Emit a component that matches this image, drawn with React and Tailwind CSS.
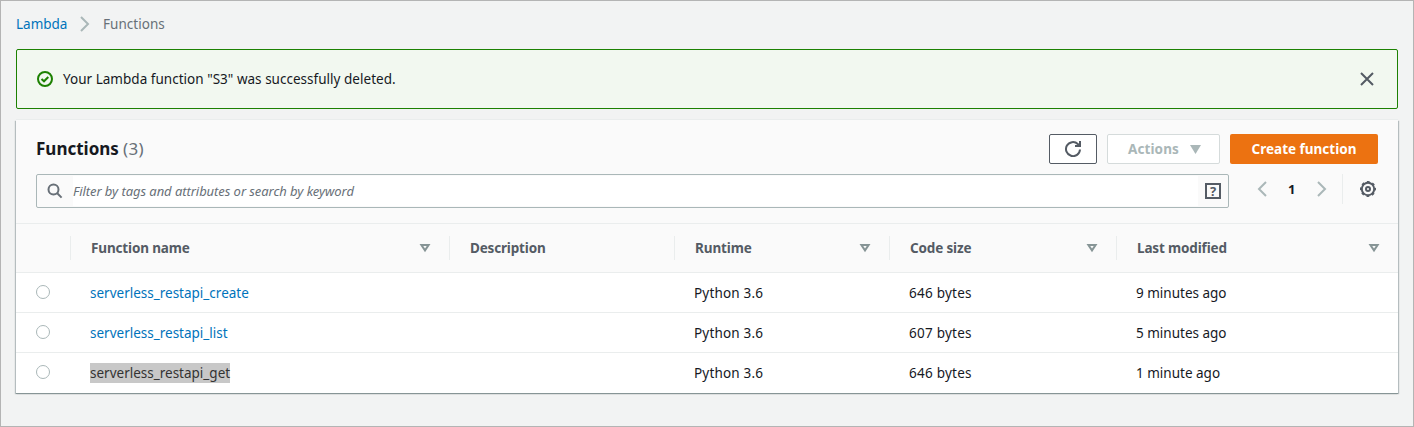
import React from "react";

const columns = [
  { label: "Function name", width: "w-[379px]", sortable: true, track: "tracking-[-0.15px]" },
  { label: "Description", width: "w-[225px]", sortable: false, track: "tracking-[-0.17px]" },
  { label: "Runtime", width: "w-[215px]", sortable: true, track: "tracking-[-0.1px]" },
  { label: "Code size", width: "w-[227px]", sortable: true, track: "tracking-[-0.15px]" },
  { label: "Last modified", width: "w-[282px]", sortable: true, track: "tracking-[-0.15px]" },
];

const rows = [
  { name: "serverless_restapi_create", runtime: "Python 3.6", size: "646 bytes", modified: "9 minutes ago" },
  { name: "serverless_restapi_list", runtime: "Python 3.6", size: "607 bytes", modified: "5 minutes ago" },
  { name: "serverless_restapi_get", runtime: "Python 3.6", size: "646 bytes", modified: "1 minute ago", selected: true },
];

function Chevron({ left = false, className = "" }) {
  return (
    <svg width="10" height="16" viewBox="0 0 10 16" fill="none" stroke="#aab7b8" strokeWidth="2" className={className}>
      <path d={left ? "M9 1 L2 8 L9 15" : "M1 1 L8 8 L1 15"} />
    </svg>
  );
}

function SortIcon() {
  return (
    <svg width="12" height="10" viewBox="0 0 12 10" fill="none" stroke="#879596" strokeWidth="2">
      <path d="M2.4 2 H9.6 L6 7.4 Z" />
    </svg>
  );
}

function Breadcrumbs() {
  return (
    <nav className="flex h-[48px] items-center pb-[2px] pl-[15px] text-[13.5px]">
      <a className="w-[52px] whitespace-nowrap text-[#0073bb]">Lambda</a>
      <Chevron className="ml-[12px] mr-[13px]" />
      <span className="tracking-[0.04px] text-[#687078]">Functions</span>
    </nav>
  );
}

function SuccessBanner() {
  return (
    <div className="mx-[15px] flex h-[60px] items-center rounded-[2px] border border-[#1d8102] bg-[#f2f8f0] pl-5 pr-[23px]">
      <svg width="16" height="16" viewBox="0 0 16 16" fill="none" stroke="#1d8102" strokeWidth="2">
        <circle cx="8" cy="8" r="7" />
        <path d="M4.5 8 L7 10.3 L11.3 6" />
      </svg>
      <span className="ml-[10px] text-[13.5px] tracking-[0.02px] text-[#16191f]">Your Lambda function "S3" was successfully deleted.</span>
      <svg width="14" height="14" viewBox="0 0 14 14" fill="none" stroke="#545b64" strokeWidth="2" className="ml-auto">
        <path d="M1 1 L13 13 M13 1 L1 13" />
      </svg>
    </div>
  );
}

function Toolbar() {
  return (
    <div className="flex h-[44px] items-start pl-[20px] pr-[20px] pt-[14px]">
      <h2 className="flex h-[30px] items-center whitespace-nowrap text-[17px] font-bold text-[#16191f]">
        <span className="w-[87px]">Functions</span>
        <span className="font-normal tracking-[0.3px] text-[#687078]">(3)</span>
      </h2>
      <div className="ml-auto flex gap-[10px] text-[13.5px] font-bold">
        <button className="flex h-[30px] w-[48px] items-center justify-center rounded-[2px] border border-[#545b64] bg-white">
          <svg width="16" height="16" viewBox="0 0 16 16" fill="none" stroke="#545b64" strokeWidth="2">
            <path d="M15 8.5 A7 7 0 1 1 12.8 3 L14.4 4.6" />
            <path d="M10 5 H15 V0" />
          </svg>
        </button>
        <button className="flex h-[30px] w-[113px] items-center rounded-[2px] border border-[#d5dbdb] bg-white pl-[20px] text-[#aab7b8]">
          <span className="w-[62px] text-left tracking-[0.1px]">Actions</span>
          <svg width="11" height="9" viewBox="0 0 11 9" fill="#aab7b8">
            <path d="M0 0 H11 L5.5 9 Z" />
          </svg>
        </button>
        <button className="h-[30px] w-[148px] whitespace-nowrap rounded-[2px] bg-[#ec7211] text-white">Create function</button>
      </div>
    </div>
  );
}

function FilterBar() {
  return (
    <div className="flex pb-[15px] pl-[20px] pr-[22px] pt-[10px]">
      <div className="flex h-[34px] w-[1193px] items-center rounded-[2px] border border-[#aab7b8] bg-[#fafafa]">
        <span className="flex w-[36px] justify-center">
          <svg width="16" height="16" viewBox="0 0 16 16" fill="none" stroke="#687078" strokeWidth="2">
            <circle cx="6.5" cy="6.5" r="5" />
            <path d="M10 10 L14.6 14.6" />
          </svg>
        </span>
        <span className="flex h-[30px] flex-1 items-center bg-white text-[13px] italic tracking-[-0.06px] text-[#687078]">
          Filter by tags and attributes or search by keyword
        </span>
        <span className="flex w-[30px] justify-center">
          <span className="flex h-4 w-4 items-center justify-center border-2 border-[#545b64] text-[13px] font-bold leading-none text-[#545b64]">?</span>
        </span>
      </div>
      <div className="ml-[28px] flex h-[30px] flex-1 items-center">
        <Chevron left />
        <span className="ml-[21px] w-[10px] text-[13px] font-bold text-[#16191f]">1</span>
        <Chevron className="ml-[19px]" />
        <span className="ml-[15px] h-[30px] w-px bg-[#eaeded]" />
        <svg width="16" height="16" viewBox="0 0 16 16" fill="none" stroke="#545b64" className="ml-auto">
          <circle cx="8" cy="8" r="6.2" strokeWidth="2" />
          <circle cx="8" cy="8" r="7.3" strokeWidth="1.4" strokeDasharray="2.87 2.87" strokeDashoffset="1.43" />
          <circle cx="8" cy="8" r="2" strokeWidth="2" />
        </svg>
      </div>
    </div>
  );
}

function FunctionsTable() {
  return (
    <div>
      <div className="flex h-[50px] items-center border-y border-[#eaeded] text-[13.5px] font-bold text-[#545b64]">
        <div className="w-[54px]" />
        {columns.map((c) => (
          <div key={c.label} className={`flex h-[24px] items-center justify-between border-l border-[#eaeded] pl-5 pr-[18px] ${c.width}`}>
            <span className={`whitespace-nowrap ${c.track}`}>{c.label}</span>
            {c.sortable && <SortIcon />}
          </div>
        ))}
      </div>
      {rows.map((r) => (
        <div key={r.name} className="flex h-[40px] items-center border-b border-[#eaeded] bg-white text-[13.5px] text-[#16191f] last:border-b-0">
          <div className="w-[74px] pl-5">
            <span className="block h-[14px] w-[14px] -translate-y-px rounded-full border border-[#aab7b8] bg-white" />
          </div>
          <div className="w-[604px]">
            <span className={r.selected ? "inline-block h-5 bg-[#c8c8c8] leading-5 text-[#333]" : "text-[#0073bb]"}>{r.name}</span>
          </div>
          <div className="w-[215px] tracking-[0.18px]">{r.runtime}</div>
          <div className="w-[227px] tracking-[0.24px]">{r.size}</div>
          <div>{r.modified}</div>
        </div>
      ))}
    </div>
  );
}

export default function App() {
  return (
    <div className="h-[427px] w-[1414px] overflow-hidden border border-[#b4b4b4] bg-[#f2f3f3] font-['Noto_Sans',sans-serif] leading-5">
      <Breadcrumbs />
      <SuccessBanner />
      <main className="mx-[15px] mt-[11px] h-[273px] bg-[#fafafa] shadow-[0_-1px_0_0_#eaeded,0_1px_0_0_#879596,1px_1px_1px_0_rgba(0,28,36,0.25),-1px_1px_1px_0_rgba(0,28,36,0.25)]">
        <Toolbar />
        <FilterBar />
        <FunctionsTable />
      </main>
    </div>
  );
}
